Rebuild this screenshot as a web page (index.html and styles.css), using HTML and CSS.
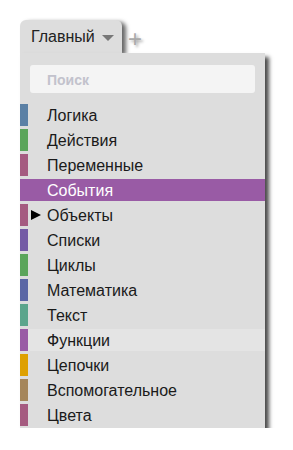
FILE: index.html
```html
<!DOCTYPE html>
<html lang="ru">
<head>
    <meta charset="UTF-8">
    <meta name="viewport" content="width=device-width, initial-scale=1.0">
    <title>Toolbox</title>
    <link rel="stylesheet" href="styles.css">
</head>
<body>
    <div class="tabs">
        <div class="tab">
            <span class="tab-name">Главный</span>
            <span class="caret"></span>
        </div>
        <span class="add">+</span>
    </div>
    <div class="panel">
        <input class="search" type="text" placeholder="Поиск">
        <ul class="cats">
            <li class="cat" style="--c: #5b80a5">Логика</li>
            <li class="cat" style="--c: #5ba55b">Действия</li>
            <li class="cat" style="--c: #a55b80">Переменные</li>
            <li class="cat selected" style="--c: #995ba5">События</li>
            <li class="cat" style="--c: #a55b80"><span class="arrow"></span>Объекты</li>
            <li class="cat" style="--c: #745ba5">Списки</li>
            <li class="cat" style="--c: #5ba55b">Циклы</li>
            <li class="cat" style="--c: #5b67a5">Математика</li>
            <li class="cat" style="--c: #5ba58c">Текст</li>
            <li class="cat hover" style="--c: #995ba5">Функции</li>
            <li class="cat" style="--c: #dea000">Цепочки</li>
            <li class="cat" style="--c: #a5865b">Вспомогательное</li>
            <li class="cat" style="--c: #a55b80">Цвета</li>
        </ul>
    </div>
</body>
</html>
```

FILE: styles.css
```css
*{
    margin: 0;
    padding: 0;
    box-sizing: border-box;
    font-family: "Liberation Sans", Arial, sans-serif;
}
body{
    background-color: white;
    padding: 20px 0 0 20px;
}
.tabs{
    display: flex;
    align-items: center;
}
.tab{
    height: 33px;
    width: 102px;
    padding: 0 8px 0 11px;
    display: flex;
    align-items: center;
    justify-content: space-between;
    background-color: #dddddd;
    border-radius: 6px 6px 0 0;
    box-shadow: 4px 2px 4px rgba(0, 0, 0, 0.6);
    position: relative;
}
.tab-name{
    font-size: 16px;
    color: #222;
}
.caret{
    width: 0;
    height: 0;
    border-left: 6px solid transparent;
    border-right: 6px solid transparent;
    border-top: 6px solid #777;
    margin-top: 2px;
}
.add{
    margin: 0 0 0 6px;
    font-size: 24px;
    line-height: 24px;
    color: #aaa;
    text-shadow: 2px 2px 3px rgba(0, 0, 0, 0.35);
    padding-top: 4px;
}
.panel{
    width: 245px;
    height: 375px;
    background-color: #dddddd;
    padding: 12px 0 2px 0;
    box-shadow: 4px 4px 4px rgba(0, 0, 0, 0.7);
    position: relative;
}
.search{
    display: block;
    width: 225px;
    height: 28px;
    margin: 0 10px;
    border: none;
    border-radius: 3px;
    background-color: #f4f4f4;
    padding: 1px 0 0 17px;
    font-size: 14px;
    font-weight: bold;
    outline: none;
}
.search::placeholder{
    color: #c2c2cc;
}
.cats{
    list-style: none;
    margin-top: 11px;
}
.cat{
    height: 22px;
    line-height: 24px;
    margin-bottom: 3px;
    padding-left: 19px;
    font-size: 16px;
    color: #1a1a1a;
    border-left: 8px solid var(--c);
    position: relative;
}
.cat.selected{
    background-color: var(--c);
    color: white;
}
.cat.hover{
    background-color: #e4e4e4;
}
.arrow{
    position: absolute;
    left: 3px;
    top: 6px;
    width: 0;
    height: 0;
    border-top: 5.5px solid transparent;
    border-bottom: 5.5px solid transparent;
    border-left: 10px solid black;
}
```
